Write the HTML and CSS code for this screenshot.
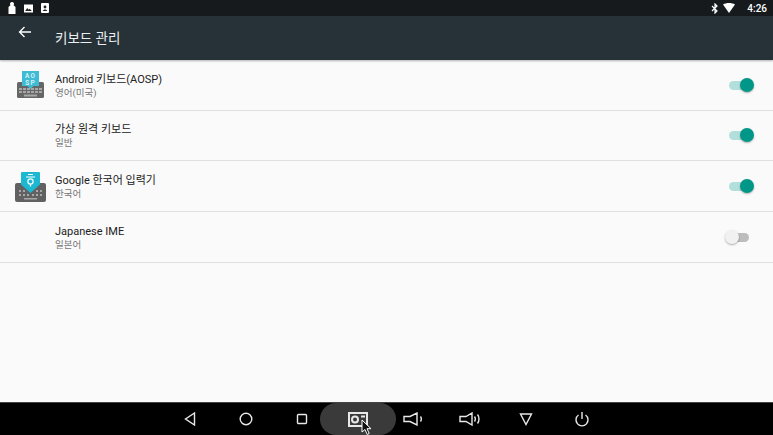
FILE: index.html
```html
<!DOCTYPE html>
<html lang="ko">

<head>
    <meta charset="UTF-8">
    <meta name="viewport" content="width=device-width, initial-scale=1.0">
    <title>키보드 관리</title>
    <link rel="stylesheet" href="styles.css">
</head>

<body>
    <div class="status-bar">
        <div class="status-left">
            <svg width="8" height="12" viewBox="0 0 8 12"><path d="M4 0a2 2 0 0 1 1.600 3.200L7.500 5v7H.5V5l1.900-1.800A2 2 0 0 1 4 0z" fill="#fff"/></svg>
            <svg width="9" height="9" viewBox="0 0 9 9"><path d="M0 .5h9v8H0z" fill="#fff"/><path d="M1.200 7l2.100-3 1.400 1.800 1-1.100 2.100 2.300z" fill="#222"/></svg>
            <svg width="8" height="10" viewBox="0 0 8 10"><path d="M1 0h6a1 1 0 0 1 1 1v8a1 1 0 0 1-1 1H1a1 1 0 0 1-1-1V1a1 1 0 0 1 1-1z" fill="#fff"/><circle cx="4" cy="4" r="1.400" fill="#222"/><path d="M1.800 8c.5-2 3.900-2 4.400 0z" fill="#222"/></svg>
        </div>
        <div class="status-right">
            <svg class="bt-icon" width="8" height="11" viewBox="0 0 8 11"><path d="M1 3l5 5-2 2V1l2 2-5 5" fill="none" stroke="#fff" stroke-width="1.200"/></svg>
            <svg class="wifi-icon" width="12" height="10" viewBox="0 0 12 10"><path d="M0 1.500C3.200-.5 8.800-.5 12 1.500L6 10z" fill="#fff"/></svg>
            <span class="clock">4:26</span>
        </div>
    </div>

    <div class="app-bar">
        <svg class="back-icon" width="14" height="12" viewBox="0 0 14 12"><path d="M13 6H2M6.500 1L1.500 6l5 5" fill="none" stroke="#fff" stroke-width="1.300"/></svg>
        <h1>키보드 관리</h1>
    </div>

    <div class="list">
        <div class="row">
            <div class="row-icon">
                <svg width="30" height="30" viewBox="0 0 30 30">
                    <rect x="1" y="12" width="27" height="16" rx="1.500" fill="#666"/>
                    <g fill="#a8a8a8">
                        <rect x="3" y="18" width="3" height="2"/><rect x="7" y="18" width="3" height="2"/><rect x="11" y="18" width="3" height="2"/><rect x="15" y="18" width="3" height="2"/><rect x="19" y="18" width="3" height="2"/><rect x="23" y="18" width="3" height="2"/>
                        <rect x="3" y="21" width="3" height="2"/><rect x="7" y="21" width="3" height="2"/><rect x="11" y="21" width="3" height="2"/><rect x="15" y="21" width="3" height="2"/><rect x="19" y="21" width="3" height="2"/><rect x="23" y="21" width="3" height="2"/>
                        <rect x="8" y="24.500" width="13" height="2"/>
                    </g>
                    <path d="M6 1h17v15h-5.500l-3 3-3-3H6z" fill="#3fbcd4"/>
                    <text x="14.500" y="7.500" class="key-text">AO</text>
                    <text x="14.500" y="15" class="key-text">SP</text>
                </svg>
            </div>
            <div class="row-text">
                <div class="row-title">Android 키보드(AOSP)</div>
                <div class="row-sub">영어(미국)</div>
            </div>
            <div class="switch on"><span class="track"></span><span class="thumb"></span></div>
        </div>
        <div class="row">
            <div class="row-icon"></div>
            <div class="row-text">
                <div class="row-title">가상 원격 키보드</div>
                <div class="row-sub">일반</div>
            </div>
            <div class="switch on"><span class="track"></span><span class="thumb"></span></div>
        </div>
        <div class="row">
            <div class="row-icon">
                <svg width="32" height="32" viewBox="0 0 32 32">
                    <rect x="0" y="13" width="31" height="19" rx="2" fill="#616161"/>
                    <g fill="#a8a8a8">
                        <rect x="4" y="20" width="2" height="2"/><rect x="8" y="20" width="2" height="2"/><rect x="21" y="20" width="2" height="2"/><rect x="25" y="20" width="2" height="2"/>
                        <rect x="4" y="24" width="2" height="2"/><rect x="8" y="24" width="2" height="2"/><rect x="12" y="24" width="2" height="2"/><rect x="17" y="24" width="2" height="2"/><rect x="21" y="24" width="2" height="2"/><rect x="25" y="24" width="2" height="2"/>
                        <rect x="9" y="28" width="13" height="1.500"/>
                    </g>
                    <path d="M6 3a1 1 0 0 1 1-1h17a1 1 0 0 1 1 1v11.500L15.500 23 6 14.500z" fill="#1cb8d2"/>
                    <g fill="none" stroke="#fff" stroke-width="1.200">
                        <path d="M13 4.500h5M11 7h9"/>
                        <circle cx="15.500" cy="11.500" r="2.600"/>
                        <path d="M15.500 14v2.500"/>
                    </g>
                </svg>
            </div>
            <div class="row-text">
                <div class="row-title">Google 한국어 입력기</div>
                <div class="row-sub">한국어</div>
            </div>
            <div class="switch on"><span class="track"></span><span class="thumb"></span></div>
        </div>
        <div class="row">
            <div class="row-icon"></div>
            <div class="row-text">
                <div class="row-title">Japanese IME</div>
                <div class="row-sub">일본어</div>
            </div>
            <div class="switch off"><span class="track"></span><span class="thumb"></span></div>
        </div>
    </div>

    <div class="nav-bar">
        <div class="nav-btn">
            <svg width="12" height="14" viewBox="0 0 12 14"><path d="M10.500 1L1.500 7l9 6z"/></svg>
        </div>
        <div class="nav-btn">
            <svg width="14" height="14" viewBox="0 0 14 14"><circle cx="7" cy="7" r="5.800"/></svg>
        </div>
        <div class="nav-btn">
            <svg width="12" height="12" viewBox="0 0 12 12"><rect x="1.500" y="1.500" width="9" height="9" rx="1"/></svg>
        </div>
        <div class="nav-btn active">
            <svg width="20" height="15" viewBox="0 0 20 15"><rect x="1" y="1" width="18" height="13"/><circle cx="7" cy="7.500" r="3"/><path d="M13 4.500h4"/></svg>
        </div>
        <div class="nav-btn">
            <svg width="22" height="14" viewBox="0 0 22 14"><path d="M1 4.500h6L14 1v12l-7-3.500H1zM17.500 4.500c1 1.500 1 3.500 0 5"/></svg>
        </div>
        <div class="nav-btn">
            <svg width="22" height="14" viewBox="0 0 22 14"><path d="M1 4.500h6L13 1v12l-6-3.500H1zM15.500 4.500c1 1.500 1 3.500 0 5M18.500 2.500c2 2.500 2 6.500 0 9"/></svg>
        </div>
        <div class="nav-btn">
            <svg width="14" height="14" viewBox="0 0 14 14"><path d="M1.500 2h11L7 12.500z"/></svg>
        </div>
        <div class="nav-btn">
            <svg width="14" height="16" viewBox="0 0 14 16"><path d="M7 1v7M3.500 4A6 6 0 1 0 10.500 4"/></svg>
        </div>
        <svg class="cursor" width="12" height="17" viewBox="0 0 12 17"><path d="M1 1v12l3-2.500 2.200 5 2-1-2.200-4.800h4z" fill="#111" stroke="#fff" stroke-width="1"/></svg>
    </div>
</body>

</html>
```

FILE: styles.css
```css
html,
body {
    margin: 0;
    height: 100%;
}

body {
    display: flex;
    flex-direction: column;
    height: 100vh;
    overflow: hidden;
    background-color: #fafafa;
    font-family: Roboto, "Noto Sans CJK KR", sans-serif;
}

.status-bar {
    display: flex;
    justify-content: space-between;
    align-items: center;
    height: 16px;
    padding: 0 6px 0 8px;
    background-color: #161a1c;
    color: #fff;
}

.status-left {
    display: flex;
    align-items: center;
    gap: 8px;
}

.status-right {
    display: flex;
    align-items: center;
}

.wifi-icon {
    margin-left: 4px;
}

.clock {
    margin-left: 12px;
    font-size: 10px;
    font-weight: 500;
}

.app-bar {
    display: flex;
    align-items: flex-start;
    height: 44px;
    padding-left: 18px;
    background-color: #263238;
    box-shadow: 0 1px 2px rgba(0, 0, 0, 0.3);
    color: #fff;
}

.back-icon {
    margin-top: 10px;
}

.app-bar h1 {
    margin: 12px 0 0 23px;
    font-size: 13.500px;
    font-weight: 400;
    line-height: 20px;
    color: #eceff1;
}

.list {
    flex: 1;
}

.row {
    display: flex;
    align-items: center;
    height: 49.670px;
    border-bottom: 1px solid #e0e0e0;
    padding-right: 20px;
}

.row-icon {
    display: flex;
    justify-content: center;
    width: 62px;
    flex: none;
}

.row-icon svg {
    display: block;
}

.key-text {
    font-size: 6.400px;
    font-weight: 500;
    letter-spacing: 1.2px;
    fill: #e6f7fa;
    text-anchor: middle;
    font-family: Roboto, sans-serif;
}

.row-text {
    flex: 1;
    margin-left: -7px;
    padding-top: 2px;
}

.row-title {
    font-size: 11px;
    line-height: 14px;
    color: #212121;
}

.row-sub {
    font-size: 9.500px;
    line-height: 12px;
    color: #757575;
}

.switch {
    position: relative;
    width: 24px;
    height: 14px;
    margin-top: 2px;
}

.track {
    position: absolute;
    left: 0;
    top: 2px;
    width: 20px;
    height: 9px;
    border-radius: 5px;
}

.thumb {
    position: absolute;
    top: -1px;
    width: 14px;
    height: 14px;
    border-radius: 50%;
    box-shadow: 0 1px 2px rgba(0, 0, 0, 0.3);
}

.switch.on .track {
    background-color: #b2dfdb;
}

.switch.on .thumb {
    right: -1px;
    background-color: #009688;
}

.switch.off .track {
    background-color: #bdbdbd;
}

.switch.off .thumb {
    left: -4px;
    background-color: #f1f1f1;
}

.nav-bar {
    position: relative;
    display: flex;
    justify-content: center;
    height: 33px;
    padding-right: 1px;
    flex: none;
    background-color: #000;
    border-top: 1px solid #444;
    box-sizing: border-box;
}

.nav-btn {
    position: relative;
    display: flex;
    justify-content: center;
    align-items: center;
    width: 56px;
}

.nav-btn svg {
    position: relative;
    fill: none;
    stroke: #e8e8e8;
    stroke-width: 1.400;
}

.nav-btn.active svg {
    stroke-width: 2;
}

.nav-btn.active::before {
    content: "";
    position: absolute;
    left: -10px;
    right: -10px;
    top: 0;
    bottom: 0;
    border-radius: 16px;
    background-color: #3a3a3a;
}

.cursor {
    position: absolute;
    left: 361px;
    top: 16px;
}
```
